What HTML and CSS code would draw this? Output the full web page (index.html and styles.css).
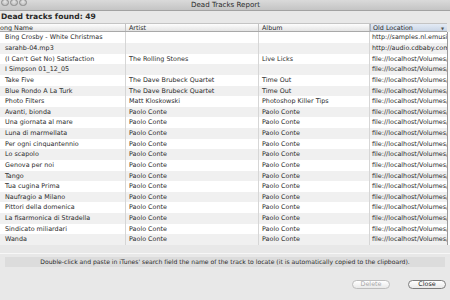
FILE: index.html
```html
<!DOCTYPE html>
<html lang="en">
<head>
  <meta charset="UTF-8" />
  <title>Dead Tracks Report</title>
  <link rel="stylesheet" href="styles.css">
</head>
<body>

  <div class="window">
    <div class="titlebar">
      <div class="lights">
        <span class="light"></span>
        <span class="light"></span>
        <span class="light"></span>
      </div>
      <div class="title">Dead Tracks Report</div>
    </div>

    <div class="info">Dead tracks found: 49</div>

    <div class="table-wrap">
      <div class="table">
        <div class="row head">
          <div class="cell">Song Name</div>
          <div class="cell">Artist</div>
          <div class="cell">Album</div>
          <div class="cell sorted">Old Location <span class="arrow">&#9660;</span></div>
        </div>
        <div class="row"><div class="cell">Bing Crosby - White Christmas</div><div class="cell"></div><div class="cell"></div><div class="cell">http://samples.nl.emusic.com/</div></div>
        <div class="row"><div class="cell">sarahb-04.mp3</div><div class="cell"></div><div class="cell"></div><div class="cell">http://audio.cdbaby.com/</div></div>
        <div class="row"><div class="cell">(I Can't Get No) Satisfaction</div><div class="cell">The Rolling Stones</div><div class="cell">Live Licks</div><div class="cell">file://localhost/Volumes/</div></div>
        <div class="row"><div class="cell">I Simpson 01_12_05</div><div class="cell"></div><div class="cell"></div><div class="cell">file://localhost/Volumes/</div></div>
        <div class="row"><div class="cell">Take Five</div><div class="cell">The Dave Brubeck Quartet</div><div class="cell">Time Out</div><div class="cell">file://localhost/Volumes/</div></div>
        <div class="row"><div class="cell">Blue Rondo A La Turk</div><div class="cell">The Dave Brubeck Quartet</div><div class="cell">Time Out</div><div class="cell">file://localhost/Volumes/</div></div>
        <div class="row"><div class="cell">Photo Filters</div><div class="cell">Matt Kloskowski</div><div class="cell">Photoshop Killer Tips</div><div class="cell">file://localhost/Volumes/</div></div>
        <div class="row"><div class="cell">Avanti, bionda</div><div class="cell">Paolo Conte</div><div class="cell">Paolo Conte</div><div class="cell">file://localhost/Volumes/</div></div>
        <div class="row"><div class="cell">Una giornata al mare</div><div class="cell">Paolo Conte</div><div class="cell">Paolo Conte</div><div class="cell">file://localhost/Volumes/</div></div>
        <div class="row"><div class="cell">Luna di marmellata</div><div class="cell">Paolo Conte</div><div class="cell">Paolo Conte</div><div class="cell">file://localhost/Volumes/</div></div>
        <div class="row"><div class="cell">Per ogni cinquantennio</div><div class="cell">Paolo Conte</div><div class="cell">Paolo Conte</div><div class="cell">file://localhost/Volumes/</div></div>
        <div class="row"><div class="cell">Lo scapolo</div><div class="cell">Paolo Conte</div><div class="cell">Paolo Conte</div><div class="cell">file://localhost/Volumes/</div></div>
        <div class="row"><div class="cell">Genova per noi</div><div class="cell">Paolo Conte</div><div class="cell">Paolo Conte</div><div class="cell">file://localhost/Volumes/</div></div>
        <div class="row"><div class="cell">Tango</div><div class="cell">Paolo Conte</div><div class="cell">Paolo Conte</div><div class="cell">file://localhost/Volumes/</div></div>
        <div class="row"><div class="cell">Tua cugina Prima</div><div class="cell">Paolo Conte</div><div class="cell">Paolo Conte</div><div class="cell">file://localhost/Volumes/</div></div>
        <div class="row"><div class="cell">Naufragio a Milano</div><div class="cell">Paolo Conte</div><div class="cell">Paolo Conte</div><div class="cell">file://localhost/Volumes/</div></div>
        <div class="row"><div class="cell">Pittori della domenica</div><div class="cell">Paolo Conte</div><div class="cell">Paolo Conte</div><div class="cell">file://localhost/Volumes/</div></div>
        <div class="row"><div class="cell">La fisarmonica di Stradella</div><div class="cell">Paolo Conte</div><div class="cell">Paolo Conte</div><div class="cell">file://localhost/Volumes/</div></div>
        <div class="row"><div class="cell">Sindicato miliardari</div><div class="cell">Paolo Conte</div><div class="cell">Paolo Conte</div><div class="cell">file://localhost/Volumes/</div></div>
        <div class="row"><div class="cell">Wanda</div><div class="cell">Paolo Conte</div><div class="cell">Paolo Conte</div><div class="cell">file://localhost/Volumes/</div></div>
      </div>
      <div class="scroller"></div>
    </div>

    <div class="separator"></div>

    <div class="hint">Double-click and paste in iTunes' search field the name of the track to locate (it is automatically copied to the clipboard).</div>

    <div class="buttons">
      <button class="btn" disabled>Delete</button>
      <button class="btn">Close</button>
    </div>
  </div>

</body>
</html>
```

FILE: styles.css
```css
:root {
  --window: #e8e8e8;
  --text: #2a2a2a;
  --grid-line: #d6d6d6;
  --stripe: #f0f0f0;
}

body {
  margin: 0;
  width: 450px;
  height: 300px;
  overflow: hidden;
  background: var(--window);
  color: var(--text);
  font-family: "DejaVu Sans", sans-serif;
  font-size: 6.4px;
}

.window {
  display: flex;
  flex-direction: column;
  height: 300px;
}

/* title bar */
.titlebar {
  height: 11px;
  display: flex;
  align-items: center;
  background: linear-gradient(#dadada, #c4c4c4);
  border-bottom: 1px solid #a2a2a2;
  box-sizing: border-box;
}

.lights {
  display: flex;
  gap: 1.5px;
  width: 0;
  padding-left: 1px;
  margin-top: -5px;
}

.light {
  flex: none;
  width: 5.5px;
  height: 5.5px;
  border-radius: 50%;
  border: 0.5px solid #8c8c8c;
  background: radial-gradient(circle at 50% 35%, #e6e6e6, #b2b2b2);
}

.title {
  flex: 1;
  text-align: center;
  font-size: 7.1px;
  color: #2a2a2a;
  margin-top: -1px;
}

.info {
  height: 12px;
  line-height: 12px;
  padding-left: 1px;
  font-weight: bold;
  font-size: 7.6px;
}

/* table */
.table-wrap {
  display: flex;
  margin-left: -7px;
}

.table {
  width: 454px;
  background: #fff;
}

.row {
  display: grid;
  grid-template-columns: 133px 133px 111px 77px;
  height: 10.63px;
  line-height: 10.63px;
}

.row:nth-child(odd) {
  background: var(--stripe);
}

.cell {
  overflow: hidden;
  white-space: nowrap;
  padding-left: 3px;
  border-right: 1px solid var(--grid-line);
}

.row .cell:first-child {
  padding-left: 12px;
}

.row .cell:last-child {
  border-right: none;
  padding-left: 2px;
}

.row.head {
  height: 9.4px;
  line-height: 9px;
  background: linear-gradient(#fdfdfd, #e4e4e4);
  border-top: 1px solid #c4c4c4;
  border-bottom: 1px solid #a9a9a9;
  box-sizing: border-box;
}

.row.head .cell {
  border-right-color: #c3c3c3;
}

.row.head .cell:first-child {
  padding-left: 3px;
}

.row.head .sorted {
  display: flex;
  justify-content: space-between;
  background: linear-gradient(#e4ebf5, #c9d5e6);
  padding-right: 3px;
  border-left: 1px solid #a6b3c6;
}

.arrow {
  font-size: 4px;
  color: #555;
}

.scroller {
  width: 3px;
  margin-top: 9px;
  background: #fafafa;
  border-left: 1px solid #9a9a9a;
}

/* footer */
.separator {
  height: 1px;
  margin-top: 8px;
  background: #f7f7f7;
}

.hint {
  margin: 3px 5px 0;
  height: 10px;
  line-height: 10px;
  text-align: center;
  font-size: 6.1px;
  background: #dcdcdc;
}

.buttons {
  display: flex;
  justify-content: flex-end;
  gap: 18px;
  padding-right: 4px;
  margin-top: 13px;
}

.btn {
  width: 38px;
  height: 9.5px;
  padding: 0;
  border-radius: 5px;
  border: 1px solid #7d7d7d;
  background: linear-gradient(#ffffff, #e9e9e9);
  font-family: "DejaVu Sans", sans-serif;
  font-size: 6.4px;
  color: #1e1e1e;
  line-height: 7px;
}

.btn:disabled {
  border-color: #bdbdbd;
  color: #a8a8a8;
}
```
